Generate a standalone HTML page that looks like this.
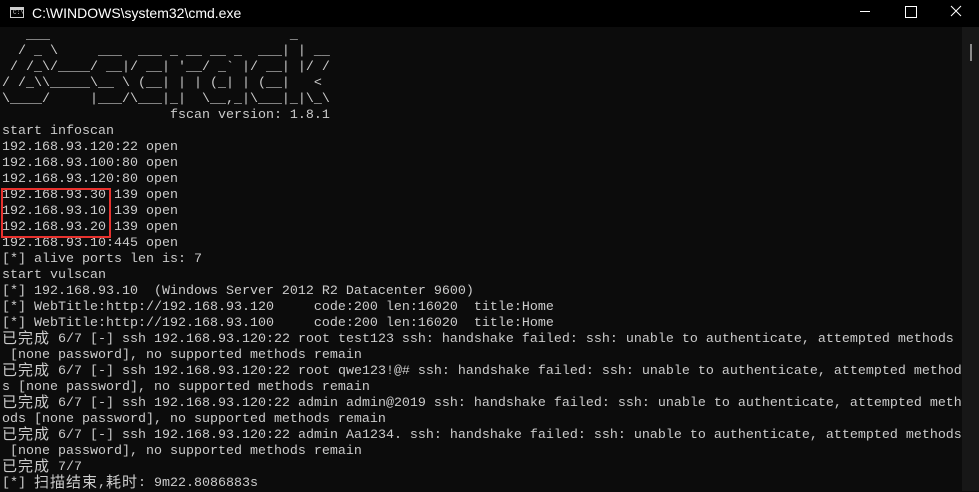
<!DOCTYPE html>
<html><head><meta charset="utf-8"><style>
html,body{margin:0;padding:0;width:979px;height:491px;overflow:hidden;background:#0c0c0c}
#tb{position:absolute;left:0;top:0;width:979px;height:27px;background:#000;color:#fff;font:14px "Liberation Sans","DejaVu Sans",sans-serif}
#tb .t{position:absolute;left:32px;top:5px}
#ico{position:absolute;left:10px;top:7px;width:14px;height:11px;border:1px solid #ccc;box-sizing:border-box;background:#000}
#ico:before{content:"";position:absolute;left:0;top:0;right:0;height:2px;background:#ccc}
#ico span{position:absolute;left:2px;top:1px;color:#ccc;font:6px "Liberation Mono",monospace}
.min{position:absolute;left:860px;top:11px;width:10px;height:1px;background:#fff}
.max{position:absolute;left:905px;top:6px;width:10px;height:10px;border:1px solid #fff}
.cls{position:absolute;left:950px;top:0px;width:12px;height:22px}
#con{position:absolute;left:0;top:27px;width:962px;height:464px;background:#0c0c0c}
#sb{position:absolute;left:962px;top:27px;width:17px;height:464px;background:#171717}
#th{position:absolute;left:970px;top:44px;width:2px;height:17px;background:#8a8a8a}
pre{position:absolute;left:2px;top:28px;margin:0;font-family:"Liberation Mono",monospace;font-size:13.33px;line-height:16px;color:#cccccc;white-space:pre}
.c{font-family:"Noto Sans CJK SC","WenQuanYi Zen Hei",sans-serif;font-size:15px;letter-spacing:1px;display:inline-block;vertical-align:top;height:16px;line-height:16px;position:relative;top:-2px}
#rb{position:absolute;left:1px;top:188px;width:106px;height:46px;border:2px solid #e8322e}
</style></head><body>
<div id="tb"><div id="ico"><span>C:\</span></div><div class="t">C:\WINDOWS\system32\cmd.exe</div>
<div class="min"></div><div class="max"></div>
<svg class="cls" viewBox="0 0 12 22"><path d="M1 6L11 16M11 6L1 16" stroke="#fff" stroke-width="1"/></svg></div>
<div id="con"></div><div id="sb"></div><div id="th"></div>
<pre>   ___                              _
  / _ \     ___  ___ _ __ __ _  ___| | __
 / /_\/____/ __|/ __| '__/ _` |/ __| |/ /
/ /_\\_____\__ \ (__| | | (_| | (__|   &lt;
\____/     |___/\___|_|  \__,_|\___|_|\_\
                     fscan version: 1.8.1
start infoscan
192.168.93.120:22 open
192.168.93.100:80 open
192.168.93.120:80 open
192.168.93.30:139 open
192.168.93.10:139 open
192.168.93.20:139 open
192.168.93.10:445 open
[*] alive ports len is: 7
start vulscan
[*] 192.168.93.10  (Windows Server 2012 R2 Datacenter 9600)
[*] WebTitle:http://192.168.93.120     code:200 len:16020  title:Home
[*] WebTitle:http://192.168.93.100     code:200 len:16020  title:Home
<span class="c">已完成</span> 6/7 [-] ssh 192.168.93.120:22 root test123 ssh: handshake failed: ssh: unable to authenticate, attempted methods
 [none password], no supported methods remain
<span class="c">已完成</span> 6/7 [-] ssh 192.168.93.120:22 root qwe123!@# ssh: handshake failed: ssh: unable to authenticate, attempted method
s [none password], no supported methods remain
<span class="c">已完成</span> 6/7 [-] ssh 192.168.93.120:22 admin admin@2019 ssh: handshake failed: ssh: unable to authenticate, attempted meth
ods [none password], no supported methods remain
<span class="c">已完成</span> 6/7 [-] ssh 192.168.93.120:22 admin Aa1234. ssh: handshake failed: ssh: unable to authenticate, attempted methods
 [none password], no supported methods remain
<span class="c">已完成</span> 7/7
[*] <span class="c">扫描结束</span>,<span class="c">耗时</span>: 9m22.8086883s</pre>
<div id="rb"></div>
</body></html>
